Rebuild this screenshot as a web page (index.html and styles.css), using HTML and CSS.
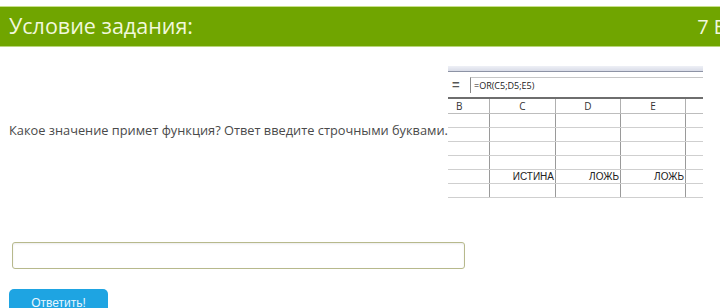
FILE: index.html
```html
<!DOCTYPE html>
<html lang="ru">
<head>
<meta charset="utf-8">
<link rel="stylesheet" href="styles.css">
</head>
<body>
<div class="page">
  <div class="task-head">
    <span class="task-title">Условие задания:</span>
    <span class="task-points">7 Б</span>
  </div>
  <div class="task-body">
    <p class="question">Какое значение примет функция? Ответ введите строчными буквами.</p>
    <div class="sheet">
      <div class="sheet-toolbar"></div>
      <div class="sheet-formula">
        <span class="eq">=</span>
        <span class="formula-box">=OR(C5;D5;E5)</span>
      </div>
      <div class="sheet-row sheet-header">
        <span class="cell">B</span><span class="cell">C</span><span class="cell">D</span><span class="cell">E</span><span class="cell"></span>
      </div>
      <div class="sheet-row"><span class="cell"></span><span class="cell"></span><span class="cell"></span><span class="cell"></span><span class="cell"></span></div>
      <div class="sheet-row"><span class="cell"></span><span class="cell"></span><span class="cell"></span><span class="cell"></span><span class="cell"></span></div>
      <div class="sheet-row"><span class="cell"></span><span class="cell"></span><span class="cell"></span><span class="cell"></span><span class="cell"></span></div>
      <div class="sheet-row"><span class="cell"></span><span class="cell"></span><span class="cell"></span><span class="cell"></span><span class="cell"></span></div>
      <div class="sheet-row values"><span class="cell"></span><span class="cell">ИСТИНА</span><span class="cell">ЛОЖЬ</span><span class="cell">ЛОЖЬ</span><span class="cell"></span></div>
      <div class="sheet-row"><span class="cell"></span><span class="cell"></span><span class="cell"></span><span class="cell"></span><span class="cell"></span></div>
    </div>
  </div>
  <div class="answer">
    <input class="answer-input" type="text">
  </div>
  <button class="submit">Ответить!</button>
</div>
</body>
</html>
```
FILE: styles.css
```css
html, body {
  margin: 0;
  padding: 0;
  background: #fff;
}
body {
  font-family: "Open Sans", sans-serif;
  overflow: hidden;
  width: 720px;
  height: 308px;
}
.page {
  padding-top: 6px;
}
.task-head {
  display: flex;
  justify-content: space-between;
  align-items: center;
  height: 39px;
  background: #70a500;
  border-top: 1px solid #c8e08a;
  border-bottom: 1px solid #b9d67a;
  padding-left: 9px;
  overflow: hidden;
  white-space: nowrap;
}
.task-title {
  color: #f1f8dc;
  font-size: 21.5px;
  line-height: 1;
  padding-bottom: 1px;
}
.task-points {
  color: #f1f8dc;
  font-size: 20px;
  line-height: 1;
  margin-right: -6px;
}
.task-body {
  display: flex;
  align-items: flex-start;
  height: 183px;
}
.question {
  margin: 75px 0 0 9px;
  width: 439px;
  font-size: 12.8px;
  color: #4a4a4a;
  white-space: nowrap;
  line-height: 16px;
}
.sheet {
  margin-top: 19px;
  width: 255px;
  font-family: "Liberation Sans", sans-serif;
}
.sheet-toolbar {
  height: 5px;
  background: linear-gradient(#eef0f6, #d9dce8);
  border-bottom: 1px solid #8d93a5;
}
.sheet-formula {
  display: flex;
  align-items: center;
  height: 25px;
  border-bottom: 2px solid #6e6e6e;
}
.eq {
  width: 22px;
  padding-left: 4px;
  box-sizing: border-box;
  font-size: 13px;
  font-weight: bold;
  color: #555;
}
.formula-box {
  flex: 1;
  height: 15px;
  border-left: 1px solid #888;
  border-top: 1px solid #c6c6c6;
  padding-left: 3px;
  font-family: "Open Sans", sans-serif;
  font-size: 9px;
  line-height: 15px;
  color: #222;
}
.sheet-row {
  display: grid;
  grid-template-columns: 42px 66px 65px 65px 17px;
  height: 13px;
  border-bottom: 1px solid #cfcfcf;
}
.sheet-row .cell {
  border-right: 1px solid #9a9a9a;
  font-size: 10px;
  line-height: 13px;
  color: #222;
}
.sheet-row .cell:last-child {
  border-right: none;
}
.sheet-header {
  height: 14px;
  border-bottom: 1px solid #bdbdbd;
}
.sheet-header .cell {
  text-align: center;
  font-family: "Open Sans", sans-serif;
  font-size: 10px;
  line-height: 14px;
  color: #333;
  border-right-color: #b0b0b0;
}
.sheet-header .cell:first-child {
  text-align: left;
  padding-left: 8px;
}
.values .cell {
  text-align: right;
  padding-right: 1px;
}
.answer {
  padding: 12px 0 0 12px;
}
.answer-input {
  display: block;
  width: 453px;
  height: 27px;
  box-sizing: border-box;
  border: 1px solid #b7b98c;
  border-radius: 3px;
  box-shadow: inset 0 1px 2px rgba(0,0,0,0.08);
  background: #fff;
  margin: 0;
}
.submit {
  display: block;
  margin: 20px 0 0 9px;
  width: 99px;
  height: 30px;
  border: none;
  border-radius: 5px;
  background: #1ea4e2;
  color: #e8f6ff;
  font-family: "Liberation Sans", sans-serif;
  font-size: 12px;
  padding: 0 0 2px;
  line-height: 1;
}
```
